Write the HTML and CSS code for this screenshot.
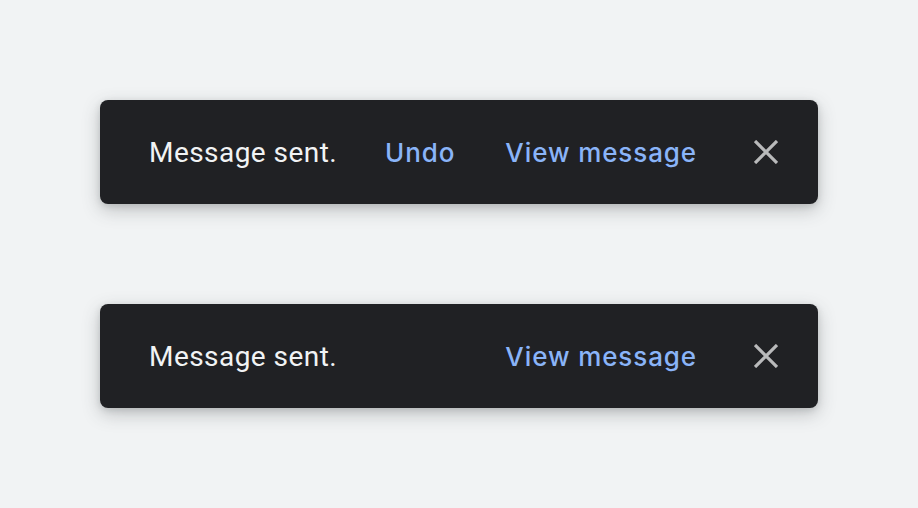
FILE: index.html
```html
<!DOCTYPE html>
<html>
<head>
<meta charset="utf-8">
<link rel="stylesheet" href="styles.css">
</head>
<body>
<div class="stack">
  <div class="snackbar">
    <span class="label">Message sent.</span>
    <div class="actions">
      <button class="action undo">Undo</button>
      <button class="action">View message</button>
    </div>
    <button class="close" aria-label="Close">
      <svg width="24" height="24" viewBox="0 0 24 24"><path d="M1 1L23 23M23 1L1 23" stroke="currentColor" stroke-width="3.2" fill="none"/></svg>
    </button>
  </div>
  <div class="snackbar">
    <span class="label">Message sent.</span>
    <div class="actions">
      <button class="action">View message</button>
    </div>
    <button class="close" aria-label="Close">
      <svg width="24" height="24" viewBox="0 0 24 24"><path d="M1 1L23 23M23 1L1 23" stroke="currentColor" stroke-width="3.2" fill="none"/></svg>
    </button>
  </div>
</div>
</body>
</html>
```
FILE: styles.css
```css
html, body {
  margin: 0;
  padding: 0;
  background: #f1f3f4;
}
.stack {
  display: flex;
  flex-direction: column;
  gap: 100px;
  padding: 100px;
}
.snackbar {
  width: 718px;
  height: 104px;
  box-sizing: border-box;
  background: #202124;
  border-radius: 8px;
  box-shadow: 0 6px 18px rgba(60, 64, 67, 0.28), 0 2px 6px rgba(60, 64, 67, 0.15);
  display: flex;
  align-items: center;
  padding: 0 28px 0 49px;
}
.label {
  flex: 1;
  font-family: Roboto, "Liberation Sans", sans-serif;
  font-size: 28px;
  color: #f1f3f4;
  letter-spacing: 0.45px;
}
.actions {
  display: flex;
  align-items: center;
  gap: 50px;
  margin-right: 45px;
}
.action {
  background: none;
  border: none;
  padding: 0;
  font-family: Inter, "Open Sans", sans-serif;
  font-weight: 500;
  font-size: 26px;
  letter-spacing: 0.9px;
  color: #8ab4f8;
  cursor: pointer;
}
.close {
  width: 48px;
  height: 48px;
  background: none;
  border: none;
  padding: 12px;
  color: #b9babb;
  display: flex;
  align-items: center;
  justify-content: center;
}
.close svg {
  display: block;
}
```
